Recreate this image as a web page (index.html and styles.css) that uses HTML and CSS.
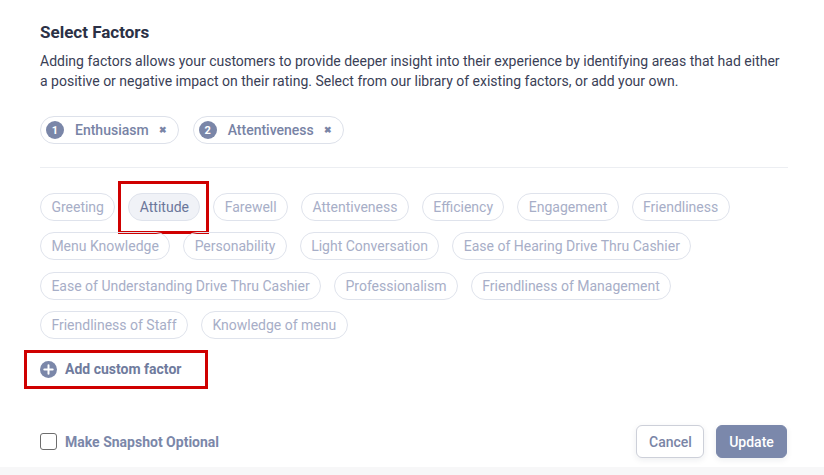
FILE: index.html
```html
<!DOCTYPE html>
<html>
<head>
<meta charset="utf-8">
<link rel="stylesheet" href="styles.css">
</head>
<body>
<div class="modal">
  <div class="content">
    <h2 class="title">Select Factors</h2>
    <p class="desc">Adding factors allows your customers to provide deeper insight into their experience by identifying areas that had either a positive or negative impact on their rating. Select from our library of existing factors, or add your own.</p>
    <div class="selected">
      <span class="sel-chip"><span class="badge">1</span><span class="sel-label">Enthusiasm</span><span class="remove">&#x2716;</span></span>
      <span class="sel-chip"><span class="badge">2</span><span class="sel-label">Attentiveness</span><span class="remove">&#x2716;</span></span>
    </div>
    <div class="divider"></div>
    <div class="factors">
      <span class="chip">Greeting</span>
      <span class="chip active">Attitude<span class="annot annot-chip"></span></span>
      <span class="chip">Farewell</span>
      <span class="chip">Attentiveness</span>
      <span class="chip">Efficiency</span>
      <span class="chip">Engagement</span>
      <span class="chip">Friendliness</span>
      <span class="chip">Menu Knowledge</span>
      <span class="chip">Personability</span>
      <span class="chip">Light Conversation</span>
      <span class="chip">Ease of Hearing Drive Thru Cashier</span>
      <span class="chip">Ease of Understanding Drive Thru Cashier</span>
      <span class="chip">Professionalism</span>
      <span class="chip">Friendliness of Management</span>
      <span class="chip">Friendliness of Staff</span>
      <span class="chip">Knowledge of menu</span>
    </div>
    <div class="add-row">
      <span class="add">
        <svg class="add-icon" width="17" height="17" viewBox="0 0 17 17"><circle cx="8.5" cy="8.5" r="8.5" fill="#7b87a9"/><path d="M8.5 4.3v8.4M4.3 8.5h8.4" stroke="#fff" stroke-width="2" stroke-linecap="round"/></svg>
        <span>Add custom factor</span>
        <span class="annot annot-add"></span>
      </span>
    </div>
    <div class="footer">
      <label class="check"><span class="box"></span><span>Make Snapshot Optional</span></label>
      <div class="buttons">
        <button class="btn cancel">Cancel</button>
        <button class="btn update">Update</button>
      </div>
    </div>
  </div>
  <div class="band"></div>
</div>
</body>
</html>
```
FILE: styles.css
```css
* { box-sizing: border-box; }
html, body { margin: 0; padding: 0; background: #fff; }
body { font-family: Roboto, "Liberation Sans", Arial, sans-serif; color: #363c52; }
.modal { width: 824px; height: 475px; display: flex; flex-direction: column; }
.content { flex: 1; padding: 20px 36px 0 40px; }
.title { margin: 0; font-size: 17px; line-height: 24px; font-weight: 700; color: #2b3146; }
.desc { margin: 7px 0 0; font-size: 14px; line-height: 20px; color: #3a4056; width: 748px; }
.selected { display: flex; gap: 14px; margin-top: 25px; }
.sel-chip { display: inline-flex; align-items: center; height: 28px; border: 1px solid #dde1ea; border-radius: 14px; padding: 0 11px 0 5px; }
.badge { width: 18px; height: 18px; border-radius: 50%; background: #7a86a8; color: #fff; font-size: 11px; font-weight: 700; display: inline-flex; align-items: center; justify-content: center; }
.sel-label { margin-left: 11px; font-size: 14px; font-weight: 500; color: #7883a5; }
.remove { margin-left: 10px; font-size: 9px; color: #7a85a6; font-weight: 700; }
.divider { height: 1px; background: #eceef2; margin-top: 23px; width: 748px; }
.factors { display: flex; flex-wrap: wrap; column-gap: 13px; row-gap: 11.4px; margin-top: 25px; width: 748px; }
.chip { position: relative; display: inline-flex; align-items: center; height: 28px; padding: 0 10.4px; border: 1px solid #dfe3ec; border-radius: 14px; font-size: 14px; color: #a7aec7; white-space: nowrap; }
.chip.active { background: #f0f2f7; color: #6b769a; }
.annot { position: absolute; border: 3px solid #cf0000; pointer-events: none; }
.annot-chip { left: -11px; top: -13px; width: 91px; height: 53px; }
.add-row { margin-top: 20px; height: 20px; display: flex; }
.add { position: relative; display: inline-flex; align-items: center; gap: 8px; font-size: 14px; font-weight: 700; color: #6f7b9d; line-height: 20px; }
.annot-add { left: -16px; top: -9px; width: 184px; height: 39px; }
.footer { margin-top: 46px; display: flex; align-items: center; justify-content: space-between; width: 747px; }
.check { display: inline-flex; align-items: center; gap: 8px; font-size: 14px; font-weight: 700; color: #7b87a9; }
.box { width: 17px; height: 17px; border: 1.5px solid #6d6d6d; border-radius: 3px; background: #fff; }
.buttons { display: flex; gap: 12px; }
.btn { font-family: Roboto, "Liberation Sans", Arial, sans-serif; font-size: 14px; font-weight: 500; height: 33px; border-radius: 6px; padding: 0 12px; box-shadow: 0 2px 6px rgba(30, 40, 70, 0.08); }
.cancel { background: #fff; border: 1px solid #cdd0d9; color: #7a85a6; width: 68px; }
.update { background: #7b88ab; border: 1px solid #7b88ab; color: #fff; width: 71px; }
.band { height: 8px; background: #f7f7f8; }
```
